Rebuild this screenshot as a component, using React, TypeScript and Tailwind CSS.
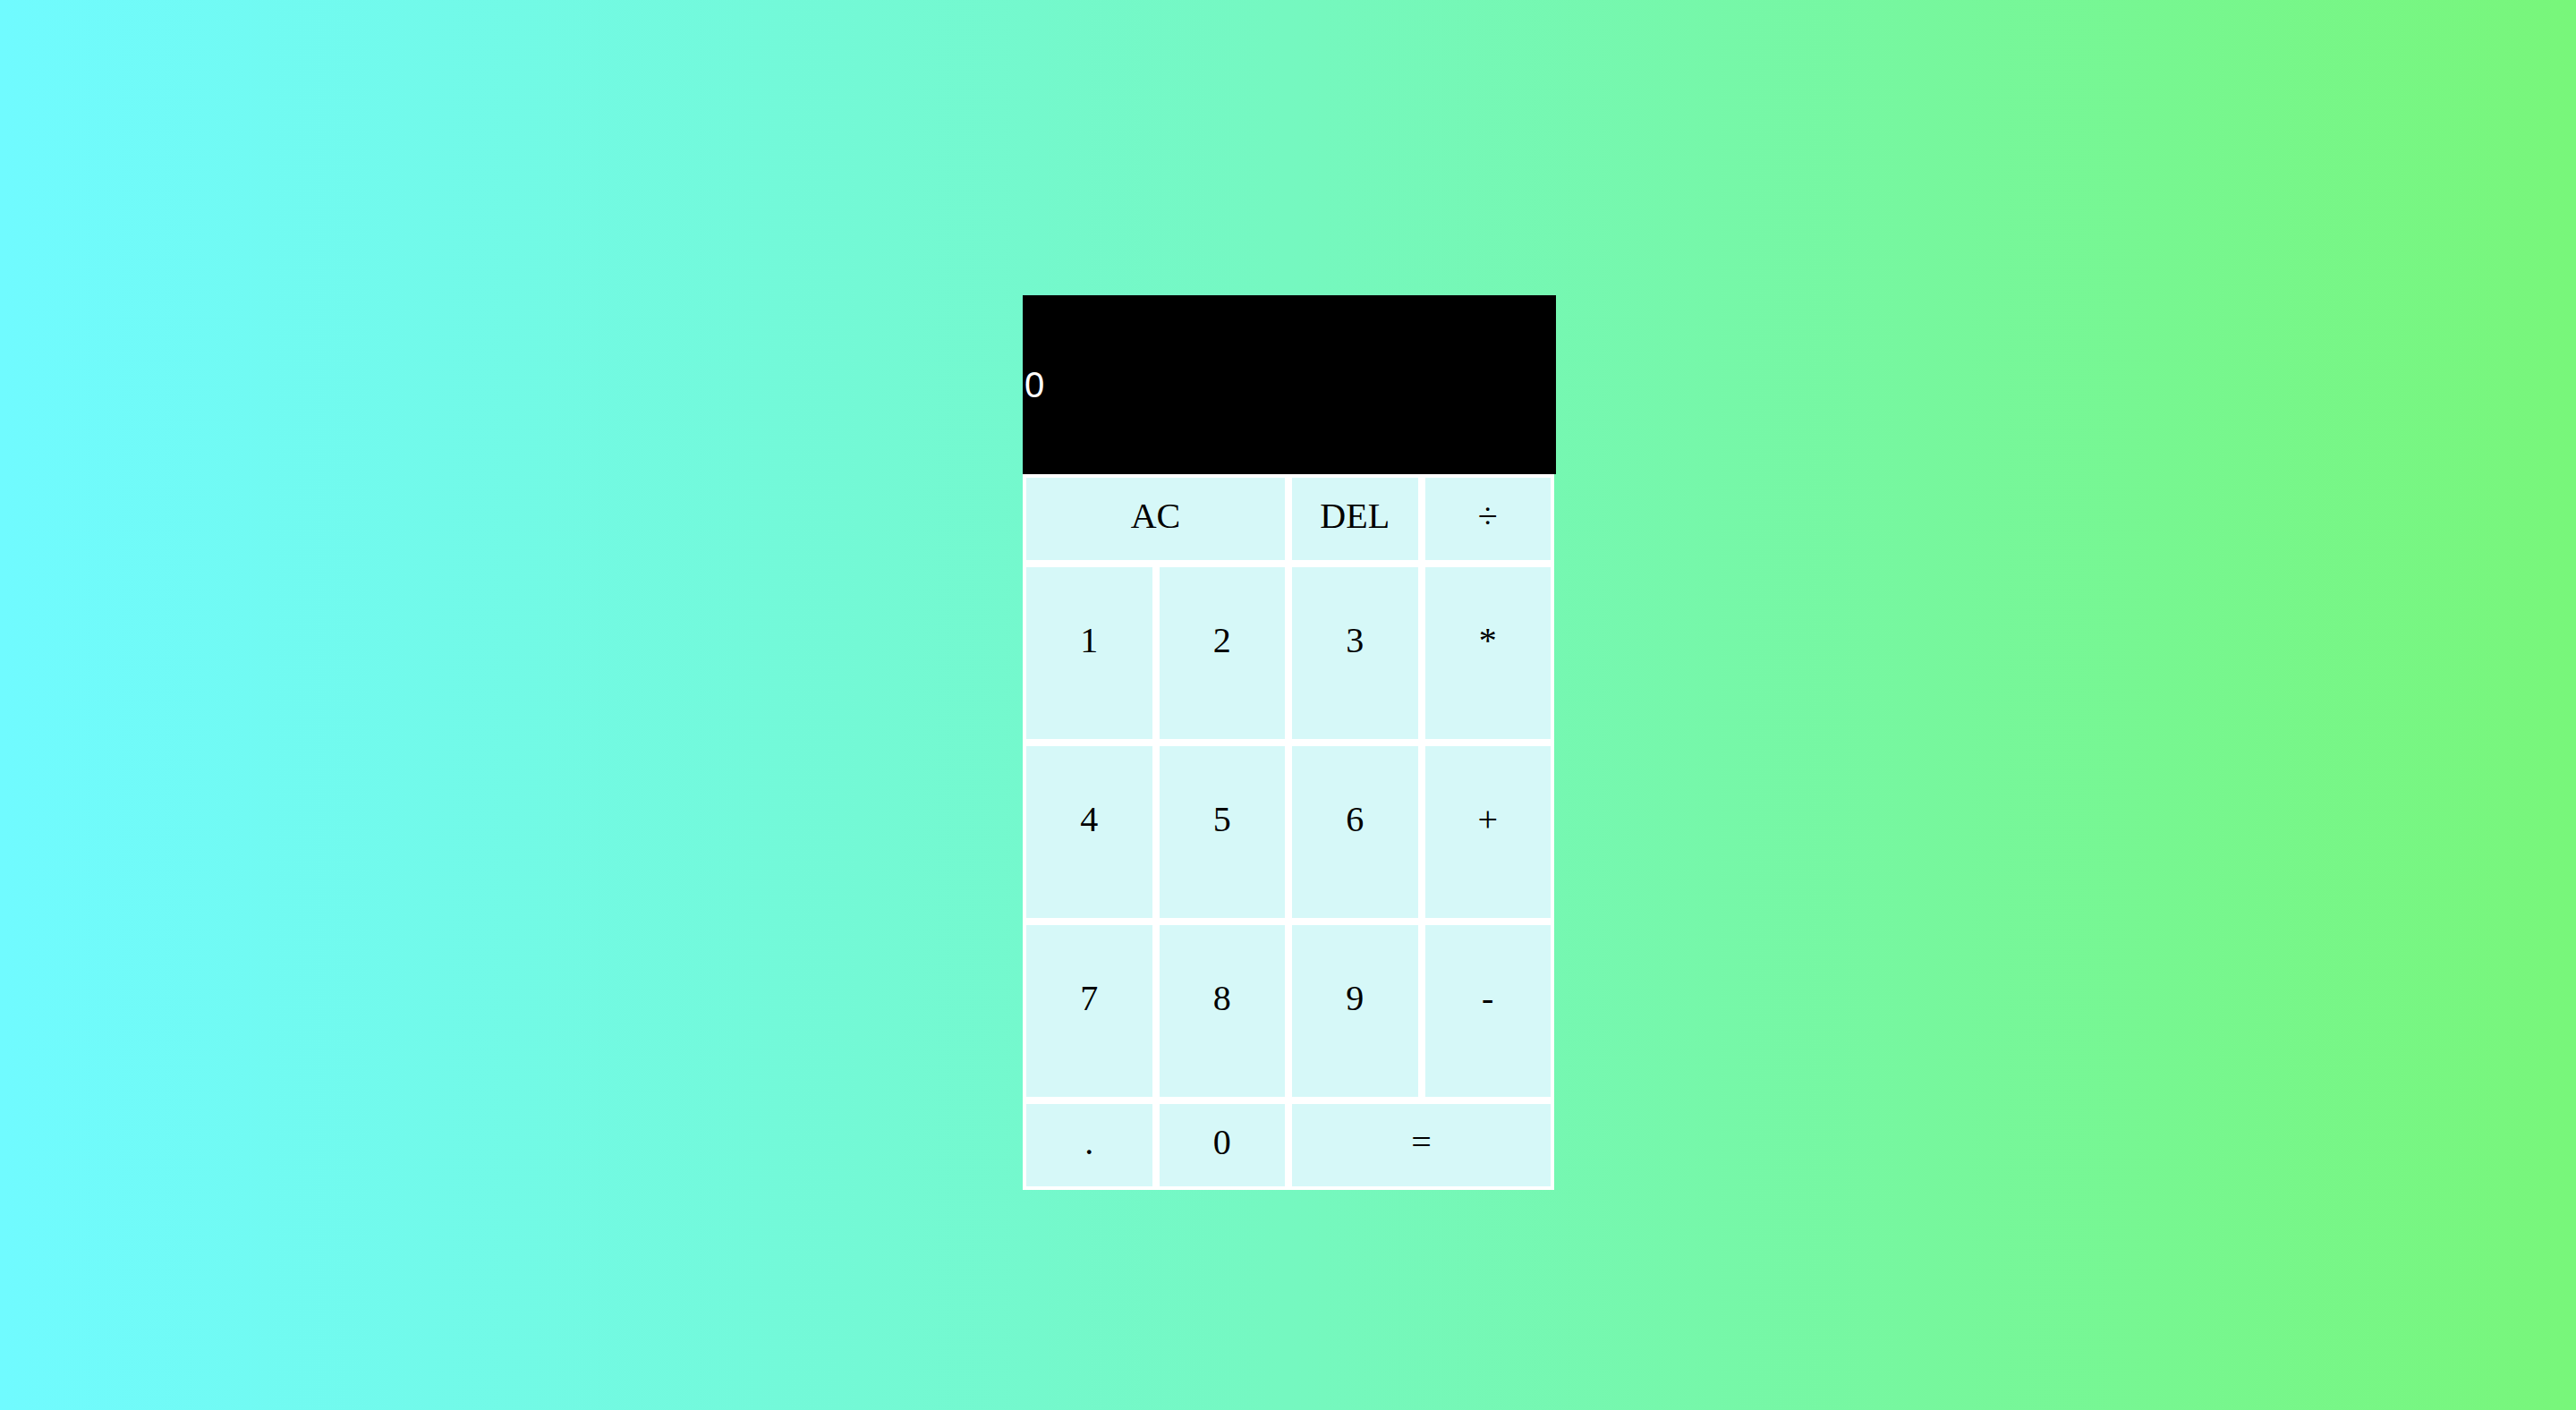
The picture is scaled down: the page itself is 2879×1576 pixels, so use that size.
import React from "react";

type Key = { label: string; span?: boolean };

const rows: { keys: Key[]; tall: boolean }[] = [
  { keys: [{ label: "AC", span: true }, { label: "DEL" }, { label: "÷" }], tall: false },
  { keys: [{ label: "1" }, { label: "2" }, { label: "3" }, { label: "*" }], tall: true },
  { keys: [{ label: "4" }, { label: "5" }, { label: "6" }, { label: "+" }], tall: true },
  { keys: [{ label: "7" }, { label: "8" }, { label: "9" }, { label: "-" }], tall: true },
  { keys: [{ label: "." }, { label: "0" }, { label: "=", span: true }], tall: false },
];

export default function App() {
  return (
    <div className="min-h-[1576px] w-full bg-[linear-gradient(to_right,#70fbff,#75f8c0,#78f67a)] flex justify-center pl-[3px] pt-[330px]">
      <div className="w-[596px] flex flex-col items-start">
        <div className="w-[596px] h-[200px] bg-black text-white flex items-center pl-[2px] text-[40px] font-['Liberation_Sans',Arial,sans-serif]">
          0
        </div>
        <div className="w-[594px] bg-white p-[4px] gap-[8px] grid grid-cols-4 grid-rows-[92px_192px_192px_192px_92px] font-['Liberation_Serif','Times_New_Roman',serif] text-[40px] text-black">
          {rows.map((row, ri) =>
            row.keys.map((k, ki) => (
              <button
                key={`${ri}-${ki}`}
                className={`bg-[#d6f8f8] flex items-center justify-center leading-none ${
                  k.span ? "col-span-2" : ""
                } ${row.tall ? "pb-[28px]" : "pb-[7px]"}`}
              >
                {k.label}
              </button>
            ))
          )}
        </div>
      </div>
    </div>
  );
}
